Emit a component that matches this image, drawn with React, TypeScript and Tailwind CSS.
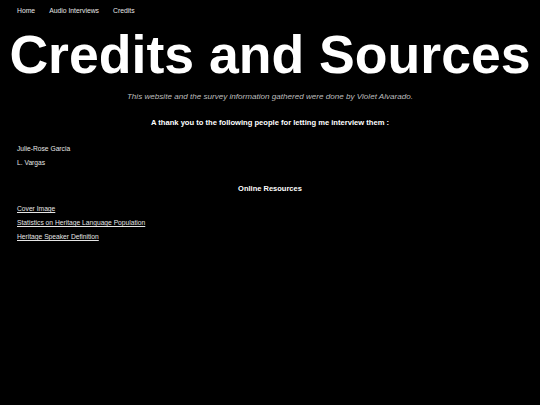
export default function App() {
  const font = { fontFamily: '"Liberation Sans", Arial, sans-serif' };
  return (
    <div className="min-h-[405px] bg-black text-white" style={font}>
      <nav className="flex gap-[14px] px-[17px] pt-[6px] text-[6.8px] leading-[10px] text-[#e6e6e6]">
        <a>Home</a>
        <a>Audio Interviews</a>
        <a>Credits</a>
      </nav>
      <h1 className="mt-[10px] text-center text-[53.6px] font-bold leading-[56px]">Credits and Sources</h1>
      <p className="mt-[9px] text-center text-[8.1px] italic leading-[12px] text-[#bdbdbd]">
        This website and the survey information gathered were done by Violet Alvarado.
      </p>
      <p className="mt-[14px] text-center text-[7.6px] font-bold leading-[12px]">
        A thank you to the following people for letting me interview them :
      </p>
      <div className="mt-[15px] flex flex-col gap-[4px] px-[17px] text-[6.7px] leading-[10px] text-[#e6e6e6]">
        <span>Julie-Rose Garcia</span>
        <span>L. Vargas</span>
      </div>
      <p className="mt-[15px] text-center text-[7.5px] font-bold leading-[12px]">Online Resources</p>
      <div className="mt-[9px] flex flex-col gap-[4px] px-[17px] text-[6.7px] leading-[10px] text-[#e6e6e6]">
        <a className="underline">Cover Image</a>
        <a className="underline">Statistics on Heritage Language Population</a>
        <a className="underline">Heritage Speaker Definition</a>
      </div>
    </div>
  );
}
